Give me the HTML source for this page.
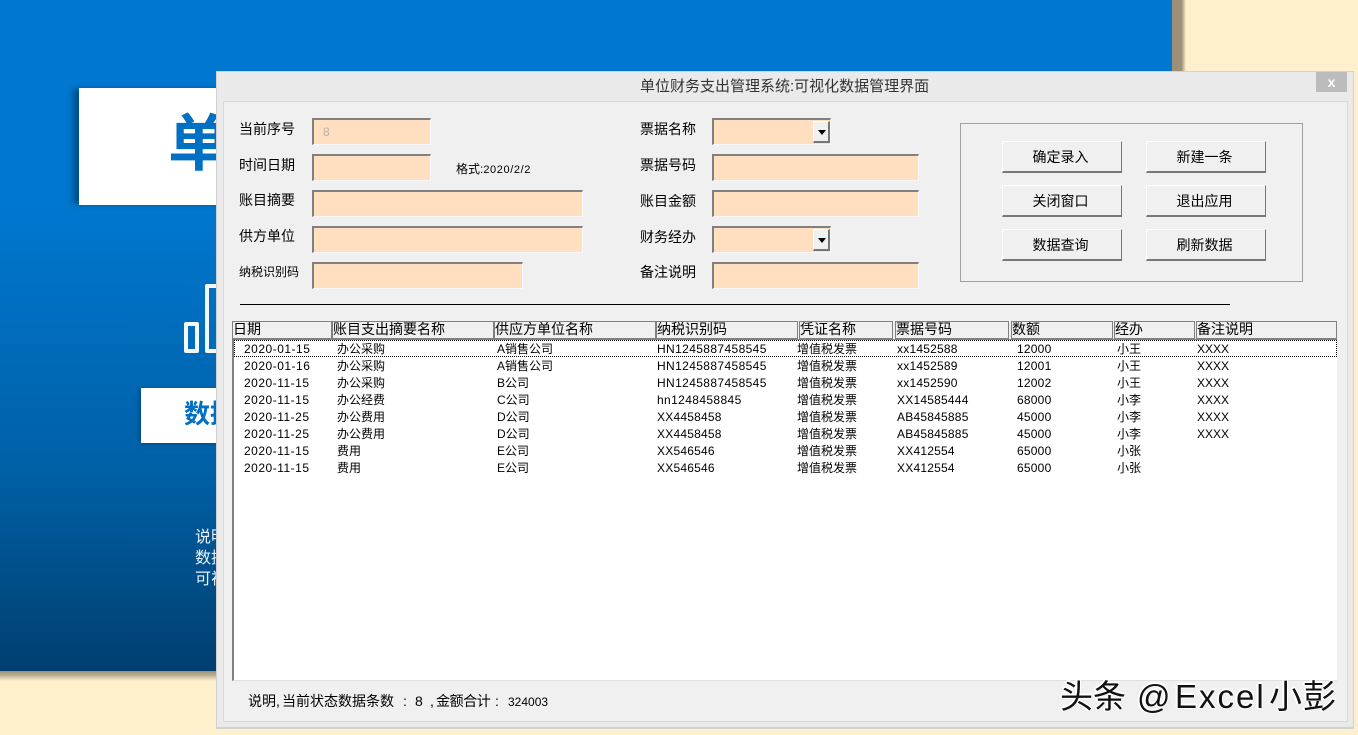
<!DOCTYPE html>
<html lang="zh"><head><meta charset="utf-8"><title>单位财务支出管理系统</title>
<style>
html,body{margin:0;padding:0;width:1358px;height:735px;overflow:hidden;background:#fff0cd}
body{position:relative;font-family:"Liberation Sans","WenQuanYi Zen Hei","Noto Sans CJK SC",sans-serif;color:#000}
div{position:absolute;white-space:nowrap;box-sizing:border-box}
.lb{font-size:14px;line-height:18px;height:18px;left:239px}
.lr{left:640px}
.f{background:#ffdfbf;border-top:2px solid #808080;border-left:2px solid #808080;border-right:1px solid #f8f8f8;border-bottom:1px solid #f8f8f8;height:27px}
.dd{top:1px;right:0;width:17px;height:22px;background:#f0f0f0;border:1px solid #fff;border-right:2px solid #777;border-bottom:2px solid #777}
.dd:after{content:"";position:absolute;left:4px;top:8px;border-left:4px solid transparent;border-right:4px solid transparent;border-top:5px solid #000}
.b{width:120px;height:32px;background:#f0f0f0;border:1px solid #fff;border-right:1px solid #777;border-bottom:2px solid #777;font-size:14px;line-height:30px;text-align:center;padding-right:3px}
.h{top:321px;height:18px;background:#f0f0f0;border:1px solid #808080;font-size:14px;line-height:14px;overflow:hidden}
.c{font-size:12px;line-height:17px;height:17px;color:#000}
.d{letter-spacing:.5px}
.t{letter-spacing:.38px}
.n{letter-spacing:.22px}
</style></head><body>
<!-- blue backdrop -->
<div style="left:1172px;top:0;width:14px;height:680px;background:linear-gradient(90deg,#9c9078 0,#9c9078 68%,#fff0cd 100%)"></div>
<div style="left:0;top:671px;width:1186px;height:10px;background:linear-gradient(180deg,#9c9078 0,#b8ac90 40%,#fff0cd 100%)"></div>
<div style="left:0;top:0;width:1172px;height:671px;background:linear-gradient(180deg,#0078d0 0,#0078d0 30%,#0060a6 70%,#003f70 100%)"></div>
<div style="left:79px;top:88px;width:160px;height:117px;background:#fff;box-shadow:-7px 0 6px -1px #004f88;overflow:hidden"><div style="left:89px;top:21px;font-size:62px;line-height:72px;font-weight:bold;color:#0070c4;font-family:'Liberation Sans','Noto Sans CJK SC',sans-serif">单位</div></div>
<div style="left:184px;top:322px;width:15px;height:31px;border:4px solid #f4f8fc;border-radius:2px"></div>
<div style="left:205px;top:284px;width:30px;height:69px;border:4px solid #f4f8fc;border-radius:2px"></div>
<div style="left:141px;top:388px;width:100px;height:55px;background:#fff;box-shadow:-2px 1px 4px #004a80"><div style="left:43px;top:8px;font-size:26px;line-height:36px;font-weight:bold;color:#0070c4;font-family:'Liberation Sans','Noto Sans CJK SC',sans-serif">数据</div></div>
<div style="left:195px;top:527px;font-size:16px;line-height:21px;color:#e8f2fa">说明<br>数据<br>可视</div>

<!-- dialog -->
<div style="left:216px;top:71px;width:1138px;height:658px;background:#eaeaea;border:1px solid #d2d2d2;border-bottom:2px solid #d2d2d2"></div>
<div style="left:223px;top:101px;width:1125px;height:621px;background:#f0f0f0;border:1px solid #d8d8d8"></div>
<div style="left:640px;top:78px;font-size:15px;line-height:18px;color:#333">单位财务支出管理系统:可视化数据管理界面</div>
<div style="left:1316px;top:72px;width:31px;height:20px;background:#bcbcbc;color:#fff;font-size:14px;font-weight:bold;line-height:20px;text-align:center">x</div>

<!-- left labels -->
<div class="lb" style="top:120px">当前序号</div>
<div class="lb" style="top:156px">时间日期</div>
<div class="lb" style="top:191px">账目摘要</div>
<div class="lb" style="top:227px">供方单位</div>
<div class="lb" style="top:263px;font-size:12px">纳税识别码</div>
<div class="f" style="left:312px;top:118px;width:119px;font-size:12px;line-height:24px;padding-left:9px;color:#b9b0a6">8</div>
<div class="f" style="left:312px;top:154px;width:119px"></div>
<div class="f" style="left:312px;top:190px;width:271px"></div>
<div class="f" style="left:312px;top:226px;width:271px"></div>
<div class="f" style="left:312px;top:262px;width:211px"></div>
<div style="left:456px;top:161px;font-size:12px;line-height:16px">格式:<span style="font-size:11px;letter-spacing:.6px">2020/2/2</span></div>

<!-- right labels -->
<div class="lb lr" style="top:120px">票据名称</div>
<div class="lb lr" style="top:156px">票据号码</div>
<div class="lb lr" style="top:192px">账目金额</div>
<div class="lb lr" style="top:228px">财务经办</div>
<div class="lb lr" style="top:263px">备注说明</div>
<div class="f" style="left:712px;top:118px;width:119px"><div class="dd"></div></div>
<div class="f" style="left:712px;top:154px;width:207px"></div>
<div class="f" style="left:712px;top:190px;width:207px"></div>
<div class="f" style="left:712px;top:226px;width:119px"><div class="dd"></div></div>
<div class="f" style="left:712px;top:262px;width:207px"></div>

<!-- buttons -->
<div style="left:960px;top:123px;width:343px;height:159px;border:1px solid #a0a0a0"></div>
<div class="b" style="left:1002px;top:141px">确定录入</div>
<div class="b" style="left:1146px;top:141px">新建一条</div>
<div class="b" style="left:1002px;top:185px">关闭窗口</div>
<div class="b" style="left:1146px;top:185px">退出应用</div>
<div class="b" style="left:1002px;top:229px">数据查询</div>
<div class="b" style="left:1146px;top:229px">刷新数据</div>
<div style="left:240px;top:304px;width:990px;height:1px;background:#000"></div>

<!-- list header -->
<div class="h" style="left:232px;width:100px">日期</div>
<div class="h" style="left:332px;width:162px">账目支出摘要名称</div>
<div class="h" style="left:494px;width:162px">供应方单位名称</div>
<div class="h" style="left:656px;width:142px">纳税识别码</div>
<div class="h" style="left:799px;width:94px">凭证名称</div>
<div class="h" style="left:895px;width:114px">票据号码</div>
<div class="h" style="left:1011px;width:102px">数额</div>
<div class="h" style="left:1114px;width:81px">经办</div>
<div class="h" style="left:1196px;width:141px">备注说明</div>

<!-- list -->
<div style="left:232px;top:339px;width:1105px;height:342px;background:#fff;border-left:2px solid #808080;border-top:1px solid #808080;border-bottom:1px solid #e0e0e0"></div>
<div style="left:234px;top:340px;width:1103px;height:17px;border:1px dotted #000"></div>

<div class="c d" style="left:244px;top:341px">2020-01-15</div><div class="c" style="left:337px;top:341px">办公采购</div><div class="c" style="left:497px;top:341px">A销售公司</div><div class="c t" style="left:657px;top:341px">HN1245887458545</div><div class="c" style="left:797px;top:341px">增值税发票</div><div class="c n" style="left:897px;top:341px">xx1452588</div><div class="c n" style="left:1017px;top:341px">12000</div><div class="c" style="left:1117px;top:341px">小王</div><div class="c" style="left:1197px;top:341px">XXXX</div>
<div class="c d" style="left:244px;top:358px">2020-01-16</div><div class="c" style="left:337px;top:358px">办公采购</div><div class="c" style="left:497px;top:358px">A销售公司</div><div class="c t" style="left:657px;top:358px">HN1245887458545</div><div class="c" style="left:797px;top:358px">增值税发票</div><div class="c n" style="left:897px;top:358px">xx1452589</div><div class="c n" style="left:1017px;top:358px">12001</div><div class="c" style="left:1117px;top:358px">小王</div><div class="c" style="left:1197px;top:358px">XXXX</div>
<div class="c d" style="left:244px;top:375px">2020-11-15</div><div class="c" style="left:337px;top:375px">办公采购</div><div class="c" style="left:497px;top:375px">B公司</div><div class="c t" style="left:657px;top:375px">HN1245887458545</div><div class="c" style="left:797px;top:375px">增值税发票</div><div class="c n" style="left:897px;top:375px">xx1452590</div><div class="c n" style="left:1017px;top:375px">12002</div><div class="c" style="left:1117px;top:375px">小王</div><div class="c" style="left:1197px;top:375px">XXXX</div>
<div class="c d" style="left:244px;top:392px">2020-11-15</div><div class="c" style="left:337px;top:392px">办公经费</div><div class="c" style="left:497px;top:392px">C公司</div><div class="c t" style="left:657px;top:392px">hn1248458845</div><div class="c" style="left:797px;top:392px">增值税发票</div><div class="c n" style="left:897px;top:392px">XX14585444</div><div class="c n" style="left:1017px;top:392px">68000</div><div class="c" style="left:1117px;top:392px">小李</div><div class="c" style="left:1197px;top:392px">XXXX</div>
<div class="c d" style="left:244px;top:409px">2020-11-25</div><div class="c" style="left:337px;top:409px">办公费用</div><div class="c" style="left:497px;top:409px">D公司</div><div class="c n" style="left:657px;top:409px">XX4458458</div><div class="c" style="left:797px;top:409px">增值税发票</div><div class="c n" style="left:897px;top:409px">AB45845885</div><div class="c n" style="left:1017px;top:409px">45000</div><div class="c" style="left:1117px;top:409px">小李</div><div class="c" style="left:1197px;top:409px">XXXX</div>
<div class="c d" style="left:244px;top:426px">2020-11-25</div><div class="c" style="left:337px;top:426px">办公费用</div><div class="c" style="left:497px;top:426px">D公司</div><div class="c n" style="left:657px;top:426px">XX4458458</div><div class="c" style="left:797px;top:426px">增值税发票</div><div class="c n" style="left:897px;top:426px">AB45845885</div><div class="c n" style="left:1017px;top:426px">45000</div><div class="c" style="left:1117px;top:426px">小李</div><div class="c" style="left:1197px;top:426px">XXXX</div>
<div class="c d" style="left:244px;top:443px">2020-11-15</div><div class="c" style="left:337px;top:443px">费用</div><div class="c" style="left:497px;top:443px">E公司</div><div class="c n" style="left:657px;top:443px">XX546546</div><div class="c" style="left:797px;top:443px">增值税发票</div><div class="c n" style="left:897px;top:443px">XX412554</div><div class="c n" style="left:1017px;top:443px">65000</div><div class="c" style="left:1117px;top:443px">小张</div>
<div class="c d" style="left:244px;top:460px">2020-11-15</div><div class="c" style="left:337px;top:460px">费用</div><div class="c" style="left:497px;top:460px">E公司</div><div class="c n" style="left:657px;top:460px">XX546546</div><div class="c" style="left:797px;top:460px">增值税发票</div><div class="c n" style="left:897px;top:460px">XX412554</div><div class="c n" style="left:1017px;top:460px">65000</div><div class="c" style="left:1117px;top:460px">小张</div>

<!-- status -->
<div style="left:248px;top:692px;font-size:14px;line-height:18px">说明,</div>
<div style="left:282px;top:692px;font-size:14px;line-height:18px">当前状态数据条数</div>
<div style="left:403px;top:692px;font-size:14px;line-height:18px">:</div>
<div style="left:415px;top:692px;font-size:14px;line-height:18px">8</div>
<div style="left:430px;top:692px;font-size:14px;line-height:18px">,</div>
<div style="left:436px;top:692px;font-size:14px;line-height:18px;letter-spacing:-.4px">金额合计</div>
<div style="left:495px;top:692px;font-size:14px;line-height:18px">:</div>
<div style="left:508px;top:693px;font-size:12px;line-height:18px">324003</div>

<!-- watermark -->
<div style="left:1060px;top:676px;font-size:33px;line-height:42px;color:#111;font-family:'Liberation Sans','Noto Sans CJK SC',sans-serif;text-shadow:-1px -1px 0 #fff,1px -1px 0 #fff,-1px 1px 0 #fff,-2px 0 0 #fff,0 -2px 0 #fff">头条</div>
<div style="left:1137px;top:676px;font-size:33px;line-height:42px;color:#111;font-family:'Liberation Sans','Noto Sans CJK SC',sans-serif;text-shadow:-1px -1px 0 #fff,1px -1px 0 #fff,-1px 1px 0 #fff,-2px 0 0 #fff,0 -2px 0 #fff">@</div>
<div style="left:1175px;top:676px;font-size:33px;line-height:42px;letter-spacing:2px;color:#111;font-family:'Liberation Sans','Noto Sans CJK SC',sans-serif;text-shadow:-1px -1px 0 #fff,1px -1px 0 #fff,-1px 1px 0 #fff,-2px 0 0 #fff,0 -2px 0 #fff">Excel</div>
<div style="left:1269px;top:676px;font-size:33px;line-height:42px;letter-spacing:1px;color:#111;font-family:'Liberation Sans','Noto Sans CJK SC',sans-serif;text-shadow:-1px -1px 0 #fff,1px -1px 0 #fff,-1px 1px 0 #fff,-2px 0 0 #fff,0 -2px 0 #fff">小彭</div>
</body></html>
